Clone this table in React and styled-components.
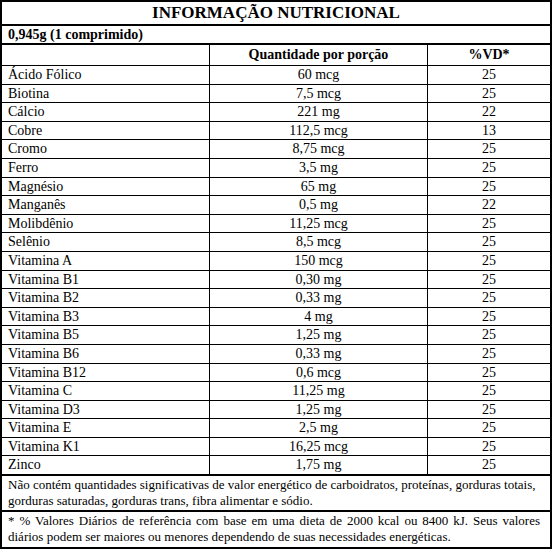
import React from "react";
import styled, { createGlobalStyle } from "styled-components";

const Global = createGlobalStyle`
  html, body {
    margin: 0;
    padding: 0;
    background: #fff;
    font-family: "Liberation Serif", "Times New Roman", serif;
  }
  * { box-sizing: border-box; }
`;

const Panel = styled.div`
  width: 552px;
  height: 549px;
  border: 2px solid #000;
  font-family: "Liberation Serif", "Times New Roman", serif;
  color: #000;
  display: flex;
  flex-direction: column;
`;

const Title = styled.div`
  height: 24px;
  border-bottom: 2px solid #000;
  font-size: 17px;
  font-weight: bold;
  line-height: 22px;
  text-align: center;
`;

const Serving = styled.div`
  height: 19px;
  border-bottom: 2px solid #000;
  font-size: 14px;
  font-weight: bold;
  line-height: 17px;
  padding-left: 6px;
`;

const Row = styled.div`
  display: grid;
  grid-template-columns: 208px 218px 1fr;
  height: ${(p) => p.$h}px;
  border-bottom: ${(p) => p.$b}px solid #000;
  font-size: 14px;
  font-weight: ${(p) => (p.$head ? "bold" : "normal")};
  line-height: ${(p) => p.$h - p.$b}px;
`;

const Cell = styled.div`
  border-right: ${(p) => (p.$last ? "none" : "1px solid #000")};
  text-align: ${(p) => (p.$center ? "center" : "left")};
  padding-left: ${(p) => (p.$center ? "0" : "6px")};
  white-space: nowrap;
`;

const Note = styled.div`
  height: ${(p) => p.$h}px;
  border-bottom: ${(p) => p.$b}px solid #000;
  font-size: 13px;
  line-height: 16px;
  padding: ${(p) => p.$pt}px 10px 0 6px;
`;

const Line = styled.div`
  text-align: ${(p) => (p.$justify ? "justify" : "left")};
  text-align-last: ${(p) => (p.$justify ? "justify" : "auto")};
  white-space: ${(p) => (p.$justify ? "normal" : "nowrap")};
`;

const data = [
  ["Ácido Fólico", "60 mcg", "25"],
  ["Biotina", "7,5 mcg", "25"],
  ["Cálcio", "221 mg", "22"],
  ["Cobre", "112,5 mcg", "13"],
  ["Cromo", "8,75 mcg", "25"],
  ["Ferro", "3,5 mg", "25"],
  ["Magnésio", "65 mg", "25"],
  ["Manganês", "0,5 mg", "22"],
  ["Molibdênio", "11,25 mcg", "25"],
  ["Selênio", "8,5 mcg", "25"],
  ["Vitamina A", "150 mcg", "25"],
  ["Vitamina B1", "0,30 mg", "25"],
  ["Vitamina B2", "0,33 mg", "25"],
  ["Vitamina B3", "4 mg", "25"],
  ["Vitamina B5", "1,25 mg", "25"],
  ["Vitamina B6", "0,33 mg", "25"],
  ["Vitamina B12", "0,6 mcg", "25"],
  ["Vitamina C", "11,25 mg", "25"],
  ["Vitamina D3", "1,25 mg", "25"],
  ["Vitamina E", "2,5 mg", "25"],
  ["Vitamina K1", "16,25 mcg", "25"],
  ["Zinco", "1,75 mg", "25"],
];

export default function App() {
  return (
    <>
      <Global />
      <Panel>
        <Title>INFORMAÇÃO NUTRICIONAL</Title>
        <Serving>0,945g (1 comprimido)</Serving>
        <Row $h={21} $b={1} $head>
          <Cell></Cell>
          <Cell $center>Quantidade por porção</Cell>
          <Cell $center $last>%VD*</Cell>
        </Row>
        {data.map(([n, q, v], i) => {
          const last = i === data.length - 1;
          return (
            <Row key={n} $h={last ? 19.5 : 18.6} $b={last ? 2 : 1}>
              <Cell>{n}</Cell>
              <Cell $center>{q}</Cell>
              <Cell $center $last>{v}</Cell>
            </Row>
          );
        })}
        <Note $h={36} $b={2} $pt={1}>
          <Line>
            Não contém quantidades significativas de valor energético de carboidratos, proteínas, gorduras totais,
          </Line>
          <Line>gorduras saturadas, gorduras trans, fibra alimentar e sódio.</Line>
        </Note>
        <Note $h={35} $b={0} $pt={1}>
          <Line $justify>
            * % Valores Diários de referência com base em uma dieta de 2000 kcal ou 8400 kJ. Seus valores
          </Line>
          <Line>diários podem ser maiores ou menores dependendo de suas necessidades energéticas.</Line>
        </Note>
      </Panel>
    </>
  );
}
